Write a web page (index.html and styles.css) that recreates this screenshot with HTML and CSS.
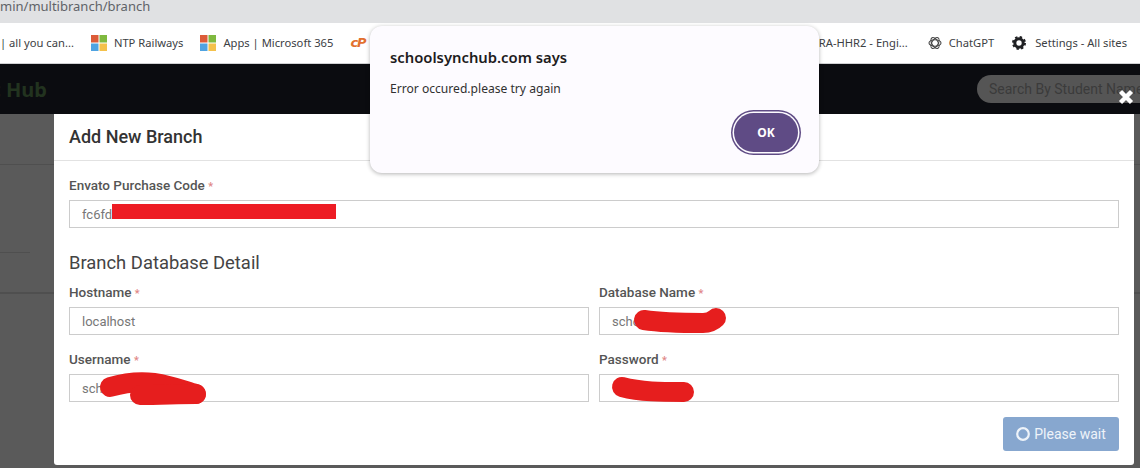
FILE: index.html
```html
<!DOCTYPE html>
<html>
<head>
  <title>Add New Branch</title>
  <link rel="stylesheet" href="styles.css">
</head>
<body>
  <div class="address-bar">min/multibranch/branch</div>

  <div class="bookmarks">
    <div class="bookmark-group">
      <span class="bookmark">| all you can...</span>
      <span class="bookmark bookmark-ms">
        <svg class="ms-icon" width="16" height="16" viewBox="0 0 16 16">
          <rect width="7.5" height="7.5" fill="#dc5b38"/>
          <rect x="8.5" width="7.5" height="7.5" fill="#7fb93f"/>
          <rect y="8.5" width="7.5" height="7.5" fill="#4fa3e1"/>
          <rect x="8.5" y="8.5" width="7.5" height="7.5" fill="#f4c14b"/>
        </svg>
        NTP Railways
      </span>
      <span class="bookmark bookmark-ms">
        <svg class="ms-icon" width="16" height="16" viewBox="0 0 16 16">
          <rect width="7.5" height="7.5" fill="#dc5b38"/>
          <rect x="8.5" width="7.5" height="7.5" fill="#7fb93f"/>
          <rect y="8.5" width="7.5" height="7.5" fill="#4fa3e1"/>
          <rect x="8.5" y="8.5" width="7.5" height="7.5" fill="#f4c14b"/>
        </svg>
        Apps | Microsoft 365
      </span>
      <span class="bookmark cpanel">cP</span>
    </div>
    <div class="bookmark-group">
      <span class="bookmark">JIRA-HHR2 - Engi...</span>
      <span class="bookmark bookmark-gpt">
        <svg width="14" height="14" viewBox="0 0 14 14" fill="none" stroke="#444" stroke-width="1.1">
          <ellipse cx="7" cy="7" rx="6" ry="3.2"/>
          <ellipse cx="7" cy="7" rx="6" ry="3.2" transform="rotate(60 7 7)"/>
          <ellipse cx="7" cy="7" rx="6" ry="3.2" transform="rotate(120 7 7)"/>
        </svg>
        ChatGPT
      </span>
      <span class="bookmark bookmark-settings">
        <svg width="14" height="14" viewBox="0 0 14 14" fill="none">
          <circle cx="7" cy="7" r="4.2" stroke="#202124" stroke-width="3"/>
          <circle cx="7" cy="7" r="6" stroke="#202124" stroke-width="2" stroke-dasharray="2.4 2.31"/>
        </svg>
        Settings - All sites
      </span>
    </div>
  </div>

  <div class="navbar">
    <div class="brand"><span>School Sync Hub</span></div>
    <div class="search">Search By Student Name</div>
  </div>

  <div class="backdrop">
    <div class="bg-row bg-row-1"></div>
    <div class="bg-row bg-row-2"><span class="bg-short"></span></div>
    <div class="bg-row bg-row-3"></div>

    <div class="modal">
      <div class="modal-header">Add New Branch</div>
      <form class="modal-body">
        <div class="field">
          <label>Envato Purchase Code <span class="req">*</span></label>
          <div class="input-wrap">
            <input type="text" value="fc6fd">
            <span class="redact-bar"></span>
          </div>
        </div>

        <h4 class="section-title">Branch Database Detail</h4>

        <div class="field-grid">
          <div class="field">
            <label>Hostname <span class="req">*</span></label>
            <div class="input-wrap">
              <input type="text" value="localhost">
            </div>
          </div>
          <div class="field">
            <label>Database Name <span class="req">*</span></label>
            <div class="input-wrap">
              <input type="text" value="scho">
              <svg class="scribble" width="140" height="28" fill="none">
                <path d="M45 13 C65 16 85 16 104 16 C110 16 114 14 117 11"/>
              </svg>
            </div>
          </div>
          <div class="field">
            <label>Username <span class="req">*</span></label>
            <div class="input-wrap">
              <input type="text" value="sch">
              <svg class="scribble" width="140" height="28" fill="none">
                <path d="M41 13 C55 9 70 7 85 9 C105 12 118 18 127 20"/>
                <path d="M71 21 C90 21 110 20 127 20"/>
              </svg>
            </div>
          </div>
          <div class="field">
            <label>Password <span class="req">*</span></label>
            <div class="input-wrap">
              <input type="password">
              <svg class="scribble" width="140 " height="28" fill="none">
                <path d="M23 13 C42 18 62 18 85 18"/>
              </svg>
            </div>
          </div>
        </div>

        <div class="form-actions">
          <button type="button" class="btn-wait">
            <svg width="14" height="14" viewBox="0 0 14 14" fill="none">
              <circle cx="7" cy="7" r="5.8" stroke="#eef3f9" stroke-width="2.2"/>
            </svg>
            Please wait
          </button>
        </div>
      </form>
    </div>
  </div>

  <svg class="modal-close" width="16" height="16" viewBox="0 0 16 16">
    <path d="M2.5 2.5 L13.5 13.5 M13.5 2.5 L2.5 13.5" stroke="#fff" stroke-width="4.4"/>
  </svg>

  <div class="alert">
    <div class="alert-title">schoolsynchub.com says</div>
    <div class="alert-text">Error occured.please try again</div>
    <div class="alert-actions">
      <button type="button" class="alert-ok">OK</button>
    </div>
  </div>
</body>
</html>
```

FILE: styles.css
```css
/* page frame */
html, body {
  margin: 0;
  height: 468px;
  overflow: hidden;
}

body {
  position: relative;
  font-family: Roboto, "Liberation Sans", sans-serif;
  background-color: #5a5a5a;
}

/* browser chrome */
.address-bar {
  height: 23px;
  line-height: 13px;
  font-family: "Noto Sans", sans-serif;
  font-size: 13px;
  color: #5f6368;
  background-color: #e0e1e3;
  white-space: nowrap;
}

.bookmarks {
  display: flex;
  justify-content: space-between;
  align-items: center;
  box-sizing: border-box;
  height: 41px;
  padding: 0 13px 1px 0;
  font-family: "Noto Sans", sans-serif;
  font-size: 11.2px;
  color: #3c4043;
  background-color: #fff;
  border-bottom: 1px solid #d0d1d3;
}

.bookmark-group {
  display: flex;
  align-items: center;
}

.bookmark {
  display: flex;
  align-items: center;
  white-space: nowrap;
}

.bookmark-ms {
  gap: 7px;
  margin-left: 17px;
}

.cpanel {
  margin-left: 17px;
  font-family: "DejaVu Sans", sans-serif;
  font-size: 13px;
  font-weight: bold;
  font-style: italic;
  letter-spacing: -1px;
  color: #e2702e;
}

.bookmark-gpt {
  gap: 7px;
  margin-left: 20px;
}

.bookmark-settings {
  gap: 9px;
  margin-left: 18px;
}

/* dark top nav of the app */
.navbar {
  display: flex;
  justify-content: space-between;
  align-items: center;
  height: 50px;
  background-color: #0b0c10;
  overflow: hidden;
}

.brand {
  display: flex;
  justify-content: flex-end;
  width: 47px;
  overflow: hidden;
  white-space: nowrap;
  font-family: "Noto Sans", sans-serif;
  font-size: 20px;
  font-weight: bold;
  color: #22331f;
}

.search {
  flex-shrink: 0;
  box-sizing: border-box;
  width: 200px;
  height: 28px;
  line-height: 28px;
  margin-right: -37px;
  padding-left: 12px;
  border-radius: 14px;
  font-size: 14px;
  color: #3b3b3b;
  background-color: #555;
  white-space: nowrap;
}

/* dimmed page behind the modal */
.backdrop {
  position: relative;
  height: 354px;
  background-color: #5a5a5a;
}

.bg-row {
  border-bottom: 1px solid #4f4f4f;
}

.bg-row-1 {
  height: 50px;
}

.bg-row-2 {
  position: relative;
  height: 127px;
}

.bg-short {
  position: absolute;
  left: 0;
  top: 87px;
  width: 30px;
  border-top: 1px solid #4f4f4f;
}

.modal {
  position: absolute;
  left: 54px;
  top: 0;
  width: 1080px;
  height: 351px;
  background-color: #fff;
  border-radius: 0 0 3px 3px;
}

.modal-header {
  box-sizing: border-box;
  height: 47px;
  line-height: 46px;
  padding-left: 15px;
  font-size: 18px;
  font-weight: 500;
  color: #333;
  border-bottom: 1px solid #e2e2e2;
}

.modal-body {
  padding: 14px 15px 0;
}

label {
  display: block;
  height: 20px;
  line-height: 20px;
  margin-bottom: 5px;
  font-size: 13.5px;
  font-weight: 500;
  color: #555;
}

.req {
  color: #e08585;
  font-size: 11px;
}

.input-wrap {
  position: relative;
  height: 28px;
}

input {
  display: block;
  box-sizing: border-box;
  width: 100%;
  height: 28px;
  padding: 0 12px;
  font-family: Roboto, sans-serif;
  font-size: 13px;
  color: #777;
  background-color: #fff;
  border: 1px solid #ccc;
  border-radius: 0;
  outline: none;
}

/* red marks drawn over the secrets */
.redact-bar {
  position: absolute;
  left: 43px;
  top: 4px;
  width: 224px;
  height: 15px;
  background-color: #ed1c24;
}

.scribble {
  position: absolute;
  left: 0;
  top: 0;
  overflow: visible;
  pointer-events: none;
}

.scribble path {
  stroke: #e61e1e;
  stroke-width: 20;
  stroke-linecap: round;
  stroke-linejoin: round;
}

.section-title {
  height: 28px;
  line-height: 28px;
  margin: 21px 0 5px;
  font-size: 18.4px;
  font-weight: 400;
  color: #444;
}

.field-grid {
  display: grid;
  grid-template-columns: 1fr 1fr;
  column-gap: 10px;
  row-gap: 14px;
}

.form-actions {
  display: flex;
  justify-content: flex-end;
  margin-top: 15px;
}

.btn-wait {
  display: flex;
  align-items: center;
  justify-content: center;
  gap: 4px;
  width: 116px;
  height: 34px;
  padding: 0;
  font-family: Roboto, sans-serif;
  font-size: 14px;
  color: #eef3f9;
  background-color: #87a7cf;
  border: none;
  border-radius: 3px;
}

.modal-close {
  position: absolute;
  left: 1118px;
  top: 89px;
}

/* browser alert on top of everything */
.alert {
  position: absolute;
  left: 370px;
  top: 26px;
  box-sizing: border-box;
  width: 449px;
  height: 147px;
  padding: 22px 20px 0 20px;
  font-family: "Noto Sans", sans-serif;
  background-color: #fdfbff;
  border-radius: 12px;
  box-shadow: 0 1px 4px rgba(0, 0, 0, 0.3);
}

.alert-title {
  height: 18px;
  line-height: 18px;
  font-size: 14.8px;
  font-weight: 600;
  color: #1d1b20;
}

.alert-text {
  height: 16px;
  line-height: 16px;
  margin-top: 15px;
  font-size: 12.1px;
  color: #303030;
}

.alert-actions {
  display: flex;
  justify-content: flex-end;
  margin-top: 16px;
}

.alert-ok {
  box-sizing: border-box;
  width: 64px;
  height: 39px;
  margin-right: 1px;
  padding: 0;
  font-family: "Noto Sans", sans-serif;
  font-size: 12px;
  font-weight: 700;
  color: #fff;
  background-color: #5f4b85;
  border: none;
  border-radius: 20px;
  box-shadow: 0 0 0 1.5px #fdfbff, 0 0 0 3px #5f4b85;
}
```
